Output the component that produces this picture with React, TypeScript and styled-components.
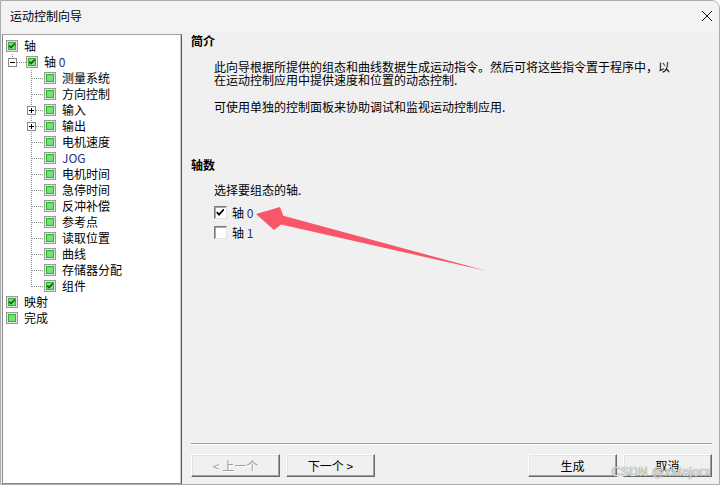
import styled, { createGlobalStyle } from 'styled-components';

const GlobalStyle = createGlobalStyle`
  html, body {
    margin: 0;
    padding: 0;
    background: #ffffff;
  }
  body {
    font-family: 'Noto Sans CJK SC', 'Noto Sans', sans-serif;
    font-size: 12px;
    color: #000;
  }
`;

const Window = styled.div`
  position: relative;
  width: 720px;
  height: 485px;
  box-sizing: border-box;
  border: 1px solid #acacac;
  border-radius: 0 8px 0 0;
  background: #f0f0f0;
  display: flex;
  flex-direction: column;
  overflow: hidden;
`;

const TitleBar = styled.div`
  height: 30px;
  flex: none;
  background: #f3f3f3;
  display: flex;
  align-items: center;
  justify-content: space-between;
  padding: 0 6px 1px 9px;
  line-height: 12px;
`;

const Body = styled.div`
  flex: 1;
  display: flex;
  min-height: 0;
`;

const Tree = styled.div`
  width: 180px;
  flex: none;
  box-sizing: border-box;
  margin: 2px 0 0 1px;
  padding-top: 3px;
  background: #fff;
  border: 1px solid;
  border-color: #a0a0a0 #5a5a5a #8a8a8a #8a8a8a;
  box-shadow: inset -1px 0 #c8c8c8;
`;

const TreeRow = styled.div`
  height: 16px;
  display: flex;
  align-items: center;
`;

const Gutter = styled.svg`
  flex: none;
  display: block;
`;

const TreeLabel = styled.span`
  margin-left: 6px;
  line-height: 16px;
  white-space: nowrap;
`;

const Latin = styled.span`
  color: #22307e;
`;

const RightPane = styled.div`
  flex: 1;
  display: flex;
  flex-direction: column;
  padding: 3px 7px 7px 9px;
  min-width: 0;
`;

const Heading = styled.div<{ $gap: number }>`
  font-weight: bold;
  line-height: 12px;
  margin-top: ${(p) => p.$gap}px;
`;

const Para = styled.p<{ $gap: number }>`
  margin: ${(p) => p.$gap}px 0 0 23px;
  line-height: 13px;
  white-space: nowrap;
`;

const Options = styled.div`
  margin: 10px 0 0 23px;
  display: flex;
  flex-direction: column;
  gap: 7px;
`;

const Option = styled.label`
  display: flex;
  align-items: center;
  height: 13px;
  line-height: 13px;
`;

const Box = styled.span`
  width: 13px;
  height: 13px;
  box-sizing: border-box;
  flex: none;
  margin-right: 5px;
  background: #fff;
  border: 1px solid;
  border-color: #7a7a7a #e3e3e3 #e3e3e3 #7a7a7a;
  box-shadow: inset 1px 1px #a8a8a8;
  display: flex;
  align-items: center;
  justify-content: center;
`;

const Separator = styled.div`
  margin-top: auto;
  border-top: 1px solid #a0a0a0;
  border-bottom: 1px solid #ffffff;
`;

const ButtonRow = styled.div`
  margin-top: 9px;
  display: flex;
  justify-content: space-between;
`;

const ButtonGroup = styled.div`
  display: flex;
  gap: 6px;
`;

const Button = styled.button`
  width: 89px;
  height: 23px;
  padding: 0;
  font-family: 'Noto Sans CJK SC', 'Noto Sans', sans-serif;
  font-size: 12px;
  color: #000;
  background: #f0f0f0;
  border: 1px solid;
  border-color: #ffffff #696969 #696969 #ffffff;
  box-shadow: inset -1px -1px #a0a0a0, inset 1px 1px #e3e3e3;

  &:disabled {
    color: #a0a0a0;
    text-shadow: 1px 1px #ffffff;
  }
`;

const Overlay = styled.svg`
  position: absolute;
  top: -1px;
  left: -1px;
  pointer-events: none;
`;

const Watermark = styled.div`
  position: absolute;
  right: 8px;
  bottom: 5px;
  font-family: 'Liberation Sans', Arial, sans-serif;
  font-size: 12px;
  line-height: 13px;
  color: rgba(255, 255, 255, 0.85);
  text-shadow: 0 0 1px #7a7a7a, 0 0 1px #7a7a7a;
  letter-spacing: 0.6px;
  pointer-events: none;
`;

type Node = {
  level: 0 | 1 | 2;
  label: string;
  latin?: string;
  checked?: boolean;
  expander?: 'plus' | 'minus';
  last?: boolean;
};

const nodes: Node[] = [
  { level: 0, label: '轴', checked: true },
  { level: 1, label: '轴 ', latin: '0', checked: true, expander: 'minus' },
  { level: 2, label: '测量系统' },
  { level: 2, label: '方向控制' },
  { level: 2, label: '输入', expander: 'plus' },
  { level: 2, label: '输出', expander: 'plus' },
  { level: 2, label: '电机速度' },
  { level: 2, label: '', latin: 'JOG' },
  { level: 2, label: '电机时间' },
  { level: 2, label: '急停时间' },
  { level: 2, label: '反冲补偿' },
  { level: 2, label: '参考点' },
  { level: 2, label: '读取位置' },
  { level: 2, label: '曲线' },
  { level: 2, label: '存储器分配' },
  { level: 2, label: '组件', checked: true, last: true },
  { level: 0, label: '映射', checked: true },
  { level: 0, label: '完成' },
];

const dot = { stroke: '#8a8a8a', strokeDasharray: '1 1', shapeRendering: 'crispEdges' as const };

const ExpandBox = ({ x, kind }: { x: number; kind: 'plus' | 'minus' }) => (
  <g shapeRendering="crispEdges">
    <rect x={x + 0.5} y={4.5} width={8} height={8} fill="#fff" stroke="#8a8a8a" />
    <line x1={x + 2} y1={8.5} x2={x + 7} y2={8.5} stroke="#000" />
    {kind === 'plus' && <line x1={x + 4.5} y1={6} x2={x + 4.5} y2={11} stroke="#000" />}
  </g>
);

const Connector = ({ node }: { node: Node }) => {
  if (node.level === 0) return <Gutter width={3} height={16} />;
  if (node.level === 1)
    return (
      <Gutter width={23} height={16}>
        <line x1={9.5} y1={0} x2={9.5} y2={4} {...dot} />
        <line x1={14} y1={8.5} x2={23} y2={8.5} {...dot} />
        {node.expander && <ExpandBox x={5} kind={node.expander} />}
      </Gutter>
    );
  return (
    <Gutter width={41} height={16}>
      <line x1={28.5} y1={0} x2={28.5} y2={node.last ? 9 : 16} {...dot} />
      <line x1={node.expander ? 33 : 29} y1={8.5} x2={41} y2={8.5} {...dot} />
      {node.expander && <ExpandBox x={24} kind={node.expander} />}
    </Gutter>
  );
};

const TreeCheck = ({ checked }: { checked?: boolean }) => (
  <svg width="12" height="12" viewBox="0 0 12 12" shapeRendering="crispEdges">
    <rect x="0.5" y="0.5" width="11" height="11" fill="#e4e4e4" stroke="#9a9a9a" />
    <rect x="2" y="2" width="8" height="8" fill="#2fb52f" />
    <rect x="3" y="3" width="6" height="6" fill="#74e274" />
    {checked && (
      <path d="M3.2 5.6 L5 7.6 L8.8 3.6" fill="none" stroke="#135f13" strokeWidth="1.6" shapeRendering="auto" />
    )}
  </svg>
);

const CloseIcon = () => (
  <svg width="12" height="12" viewBox="0 0 12 12">
    <path d="M1 1 L11 11 M11 1 L1 11" stroke="#1a1a1a" strokeWidth="1" />
  </svg>
);

const CheckMark = () => (
  <svg width="11" height="11" viewBox="0 0 11 11">
    <path d="M1.8 5 L4 7.6 L8.8 2.4" fill="none" stroke="#000" strokeWidth="1.7" />
  </svg>
);

const App = () => {
  return (
    <>
      <GlobalStyle />
      <Window>
        <TitleBar>
          <span>运动控制向导</span>
          <CloseIcon />
        </TitleBar>
        <Body>
          <Tree>
            {nodes.map((n, i) => (
              <TreeRow key={i}>
                <Connector node={n} />
                <TreeCheck checked={n.checked} />
                <TreeLabel>
                  {n.label}
                  {n.latin && <Latin>{n.latin}</Latin>}
                </TreeLabel>
              </TreeRow>
            ))}
          </Tree>
          <RightPane>
            <Heading $gap={0}>简介</Heading>
            <Para $gap={13}>
              此向导根据所提供的组态和曲线数据生成运动指令。然后可将这些指令置于程序中，以
              <br />
              在运动控制应用中提供速度和位置的动态控制.
            </Para>
            <Para $gap={14}>可使用单独的控制面板来协助调试和监视运动控制应用.</Para>
            <Heading $gap={46}>轴数</Heading>
            <Para $gap={12}>选择要组态的轴.</Para>
            <Options>
              <Option>
                <Box>
                  <CheckMark />
                </Box>
                轴&nbsp;<Latin>0</Latin>
              </Option>
              <Option>
                <Box />
                轴&nbsp;<Latin>1</Latin>
              </Option>
            </Options>
            <Separator />
            <ButtonRow>
              <ButtonGroup>
                <Button disabled>&lt; 上一个</Button>
                <Button>下一个 &gt;</Button>
              </ButtonGroup>
              <ButtonGroup>
                <Button>生成</Button>
                <Button>取消</Button>
              </ButtonGroup>
            </ButtonRow>
          </RightPane>
        </Body>
        <Overlay width={722} height={485}>
          <polygon
            points="256,214 280,207 283.3,215.8 487,271 281.1,224.6 274,230"
            fill="#f95669"
          />
        </Overlay>
        <Watermark>CSDN @xMajorx</Watermark>
      </Window>
    </>
  );
};

export default App;
